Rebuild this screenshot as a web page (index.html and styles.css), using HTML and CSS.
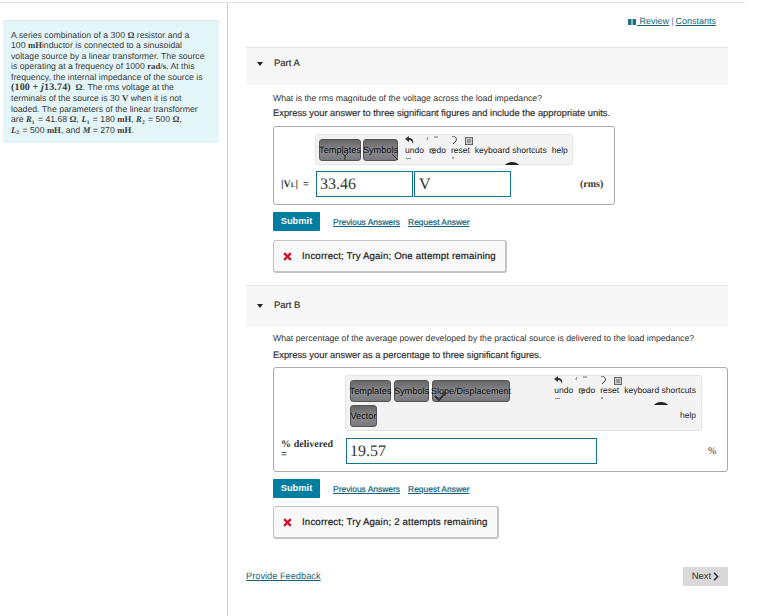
FILE: index.html
```html
<!DOCTYPE html>
<html lang="en">
<head>
<meta charset="utf-8">
<title>Part A and Part B</title>
<link rel="stylesheet" href="styles.css">
</head>
<body>
<div class="page">
  <aside class="side">
    <div class="problem">
      A series combination of a 300 <b class="m">Ω</b> resistor and a<br>
      100 <b class="m">mH</b>inductor is connected to a sinusoidal<br>
      voltage source by a linear transformer. The source<br>
      is operating at a frequency of 1000 <b class="m">rad/s</b>. At this<br>
      frequency, the internal impedance of the source is<br>
      <b class="m big">(100 + <i>j</i>13.74)</b> &nbsp;<b class="m">Ω</b>. The rms voltage at the<br>
      terminals of the source is 30 <b class="m">V</b> when it is not<br>
      loaded. The parameters of the linear transformer<br>
      are <b class="m"><i>R</i><sub>1</sub></b> = 41.68 <b class="m">Ω</b>, <b class="m"><i>L</i><sub>1</sub></b> = 180 <b class="m">mH</b>, <b class="m"><i>R</i><sub>2</sub></b> = 500 <b class="m">Ω</b>,<br>
      <b class="m"><i>L</i><sub>2</sub></b> = 500 <b class="m">mH</b>, and <b class="m"><i>M</i></b> = 270 <b class="m">mH</b>.
    </div>
  </aside>
  <main class="main">
    <div class="toplinks">
      <svg class="book" width="8" height="6" viewBox="0 0 8 6"><rect width="3.5" height="6" fill="#1f6f80"/><rect x="4.5" width="3.5" height="6" fill="#1f6f80"/></svg>
      <a class="link" href="#">&nbsp;Review</a><span class="sep">|</span><a class="link" href="#">Constants</a>
    </div>

    <section class="part part-a">
      <header class="part-head"><span class="caret"></span><span class="part-title">Part A</span></header>
      <div class="part-body">
        <p class="q">What is the rms magnitude of the voltage across the load impedance?</p>
        <p class="q strong">Express your answer to three significant figures and include the appropriate units.</p>
        <div class="answer answer-a">
          <div class="toolbar tb-a">
            <span class="tbtn t-tpl">Templates<svg class="glitch" width="10" height="8" viewBox="0 0 10 8"><path d="M2 1l3 3 3-3M5 4v4" stroke="#333" fill="none"/></svg></span>
            <span class="tbtn t-sym">Symbols<svg class="glitch g-corner" width="8" height="8" viewBox="0 0 8 8"><path d="M1 1l6 6" stroke="#333" fill="none"/></svg></span>
            <span class="tools">
              <span class="tool"><svg class="ic ic-undo" width="10" height="24" viewBox="0 0 10 24"><path d="M4 0L0 3l4 3V4c2 0 3 1 4 4 1-4-1-6-4-6z" fill="#333"/><path d="M1 22l2 1 1-1 1 1 1-1" stroke="#888" fill="none"/></svg>undo</span>
              <span class="tool"><svg class="ic ic-redo" width="14" height="20" viewBox="0 0 14 20"><path d="M8 1h4M1 4c0-1 .5-2 1-3" stroke="#777" fill="none"/><circle cx="7" cy="15" r="2.5" stroke="#777" fill="none"/></svg>redo</span>
              <span class="tool"><svg class="ic ic-reset" width="7" height="24" viewBox="0 0 7 24"><path d="M1 0c4 0 5 3 4 5L2 8" stroke="#333" fill="none"/><path d="M2 21v2" stroke="#555"/></svg>reset<svg class="ic ic-kb" width="8" height="8" viewBox="0 0 8 8"><rect x=".5" y=".5" width="7" height="7" fill="#ccc" stroke="#666"/><path d="M2 3h4M2 5h4" stroke="#666"/></svg></span>
              <span class="tool">keyboard shortcuts<svg class="ic ic-arc" width="14" height="4" viewBox="0 0 14 4"><path d="M0 4C3 0 11 0 14 4z" fill="#222"/></svg></span>
              <span class="tool">help</span>
            </span>
          </div>
          <div class="entry entry-a">
            <span class="label-v">|<b class="m">V</b><b class="m lsub">L</b>|<span class="eq"> = </span></span>
            <span class="field f-val">33.46</span>
            <span class="field f-unit">V</span>
            <span class="rms">(rms)</span>
          </div>
        </div>
        <div class="actions">
          <button class="submit" type="button">Submit</button>
          <a class="link act" href="#">Previous Answers</a>
          <a class="link act" href="#">Request Answer</a>
        </div>
        <div class="feedback fb-a">
          <svg class="x" width="9" height="9" viewBox="0 0 9 9"><path d="M1.2 1.2l6.6 6.6M7.8 1.2L1.2 7.8" stroke="#d0112b" stroke-width="2.4"/></svg>
          <span>Incorrect; Try Again; One attempt remaining</span>
        </div>
      </div>
    </section>

    <section class="part part-b">
      <header class="part-head"><span class="caret"></span><span class="part-title">Part B</span></header>
      <div class="part-body">
        <p class="q">What percentage of the average power developed by the practical source is delivered to the load impedance?</p>
        <p class="q strong">Express your answer as a percentage to three significant figures.</p>
        <div class="answer answer-b">
          <div class="toolbar tb-b">
            <div class="btn-group">
              <span class="tbtn b-tpl">Templates</span>
              <span class="tbtn b-sym">Symbols</span>
              <span class="tbtn b-slope">Slope/Displacement<svg class="check" width="18" height="9" viewBox="0 0 18 9"><path d="M1 4l4 4L12 0" stroke="#333" stroke-width="2" fill="none"/></svg></span>
              <span class="tbtn b-vec">Vector</span>
            </div>
            <div class="tool-group">
              <span class="tools">
                <span class="tool"><svg class="ic ic-undo" width="10" height="24" viewBox="0 0 10 24"><path d="M4 0L0 3l4 3V4c2 0 3 1 4 4 1-4-1-6-4-6z" fill="#333"/><path d="M1 22l2 1 1-1 1 1 1-1" stroke="#888" fill="none"/></svg>undo</span>
                <span class="tool"><svg class="ic ic-redo" width="14" height="20" viewBox="0 0 14 20"><path d="M8 1h4M1 4c0-1 .5-2 1-3" stroke="#777" fill="none"/><circle cx="7" cy="15" r="2.5" stroke="#777" fill="none"/></svg>redo</span>
                <span class="tool"><svg class="ic ic-reset" width="7" height="24" viewBox="0 0 7 24"><path d="M1 0c4 0 5 3 4 5L2 8" stroke="#333" fill="none"/><path d="M2 21v2" stroke="#555"/></svg>reset<svg class="ic ic-kb" width="8" height="8" viewBox="0 0 8 8"><rect x=".5" y=".5" width="7" height="7" fill="#ccc" stroke="#666"/><path d="M2 3h4M2 5h4" stroke="#666"/></svg></span>
                <span class="tool">keyboard shortcuts<svg class="ic ic-arc" width="14" height="4" viewBox="0 0 14 4"><path d="M0 4C3 0 11 0 14 4z" fill="#222"/></svg></span>
              </span>
              <span class="tool help-b">help</span>
            </div>
          </div>
          <div class="entry entry-b">
            <span class="label-p"><b class="m">%</b> <b class="m">delivered</b><br><span class="eq">=</span></span>
            <span class="field f-pct">19.57</span>
            <span class="pct">%</span>
          </div>
        </div>
        <div class="actions">
          <button class="submit" type="button">Submit</button>
          <a class="link act" href="#">Previous Answers</a>
          <a class="link act" href="#">Request Answer</a>
        </div>
        <div class="feedback fb-b">
          <svg class="x" width="9" height="9" viewBox="0 0 9 9"><path d="M1.2 1.2l6.6 6.6M7.8 1.2L1.2 7.8" stroke="#d0112b" stroke-width="2.4"/></svg>
          <span>Incorrect; Try Again; 2 attempts remaining</span>
        </div>
      </div>
    </section>

    <footer class="foot">
      <a class="link provide" href="#">Provide Feedback</a>
      <span class="next">Next <svg width="6" height="9" viewBox="0 0 6 9"><path d="M1 .8L4.6 4.5 1 8.2" stroke="#333" stroke-width="1.6" fill="none"/></svg></span>
    </footer>
  </main>
</div>
</body>
</html>
```
FILE: styles.css
```css
* { box-sizing: border-box; }
html, body { margin: 0; padding: 0; background: #fff; }
body {
  width: 762px;
  height: 616px;
  overflow: hidden;
  font-family: "Liberation Sans", Arial, sans-serif;
  font-size: 9.5px;
  color: #333;
  text-rendering: geometricPrecision;
}
.page {
  display: flex;
  width: 745px;
  height: 614px;
  margin-top: 2px;
  border-top: 1px solid #e2e2e2;
}
.side {
  width: 228px;
  flex: none;
  border-right: 1px solid #c8cdd2;
  padding: 17px 8px 0 3px;
}
.problem {
  height: 123px;
  background: #e4f5f7;
  border-top: 1px solid #dfe9ea;
  padding: 9px 4px 0 8px;
  font-size: 8.7px;
  line-height: 10.4px;
  white-space: nowrap;
  color: #3a3a3a;
}
.m { font-family: "Liberation Serif", serif; font-weight: 700; }
.m.big { font-size: 10px; letter-spacing: .15px; }
.m sub { font-size: 5.5px; line-height: 0; vertical-align: -1.5px; padding-right: 1px; }
.main {
  width: 517px;
  flex: none;
  padding-left: 18px;
  padding-right: 17px;
}
.toplinks {
  height: 44px;
  padding: 13px 12px 0 0;
  display: flex;
  justify-content: flex-end;
  align-items: flex-start;
  font-size: 9px;
  line-height: 11px;
}
.book { margin: 3px 1px 0 0; }
.sep { margin: 0 2px; color: #8a6a8a; }
.link { color: #12647c; text-decoration: underline; }
.part-head {
  display: flex;
  align-items: flex-start;
  background: #f7f7f7;
  border-top: 1px solid #e4e4e4;
  height: 38px;
  padding-top: 10px;
}
.part-b .part-head { height: 42px; padding-top: 14px; }
.caret {
  width: 0; height: 0;
  margin: 4px 0 0 11px;
  border-left: 3px solid transparent;
  border-right: 3px solid transparent;
  border-top: 4px solid #222;
}
.part-title { margin-left: 11px; font-size: 9.5px; line-height: 12px; color: #333; -webkit-text-stroke: .2px #333; }
.part-body { padding-left: 27px; }
.q { margin: 0; font-size: 8.7px; line-height: 11px; color: #333; white-space: nowrap; }
.part-a .q:first-child { padding-top: 8px; }
.part-b .q:first-child { padding-top: 6px; }
.q.strong { margin-top: 4px; font-size: 9.35px; -webkit-text-stroke: .2px #333; }
.part-b .q.strong { margin-top: 6px; }
.answer {
  border: 1px solid #aaa;
  border-radius: 3px;
  background: #fff;
}
.answer-a { width: 342px; height: 79px; margin-top: 7px; padding: 7px 0 0 41px; }
.answer-b { width: 455px; height: 105px; margin-top: 6px; padding: 7px 0 0 71px; }
.toolbar {
  background: #f3f3f3;
  border: 1px solid #e3e3e3;
  border-radius: 3px;
  color: #222;
}
.tb-a { width: 258px; height: 31px; display: flex; align-items: center; padding-left: 3px; }
.tb-b { width: 357px; height: 56px; display: flex; justify-content: space-between; padding: 4px 5px 0 4px; }
.btn-group { display: flex; flex-wrap: wrap; gap: 3px 3px; width: 180px; align-content: flex-start; }
.tool-group { display: flex; flex-direction: column; align-items: flex-end; padding-top: 5px; }
.help-b { margin-top: 15px; }
.tbtn {
  position: relative;
  display: inline-flex;
  align-items: center;
  justify-content: center;
  height: 22px;
  border: 1px solid #555;
  border-radius: 3px;
  background: linear-gradient(#656565, #8c8c90 55%, #78787c);
  color: #111;
  font-size: 9.2px;
  overflow: visible;
  white-space: nowrap;
}
.t-tpl { width: 42px; }
.t-sym { width: 35px; margin-left: 2px; }
.b-tpl { width: 41px; }
.b-sym { width: 35px; }
.b-slope { width: 78px; font-size: 9px; }
.b-vec { width: 27px; }
.glitch { position: absolute; left: 20px; bottom: 0; }
.g-corner { left: 27px; bottom: -1px; }
.check { position: absolute; left: 1px; bottom: 0; }
.tools { display: inline-flex; align-items: center; gap: 5px; margin-left: 7px; }
.tool-group .tools { margin-left: 0; }
.tool { position: relative; white-space: nowrap; font-size: 8.5px; }
.ic { position: absolute; }
.ic-undo { left: 0; top: -9px; }
.ic-redo { left: -3px; top: -9px; }
.ic-reset { left: 0; top: -9px; }
.ic-kb { left: 14px; top: -8px; }
.ic-arc { left: 30px; bottom: -10px; }
.entry { display: flex; align-items: center; }
.entry-a { margin-top: 6px; margin-left: -34px; }
.label-v { width: 35px; padding-top: 1px; font-size: 10px; line-height: 12px; white-space: nowrap; color: #333; }
.eq { margin-left: 2px; }
.lsub { font-size: 7px; }
.field {
  display: block;
  height: 26px;
  border: 1px solid #11758f;
  background: #fff;
  font-family: "Liberation Serif", serif;
  font-size: 16px;
  line-height: 26px;
  padding-left: 3px;
  color: #333;
}
.f-val { width: 97px; }
.f-unit { width: 97px; margin-left: 1px; padding-left: 4px; }
.rms { margin-left: 69px; font-family: "Liberation Serif", serif; font-weight: 700; font-size: 10px; }
.entry-b { margin-top: 7px; margin-left: -64px; align-items: flex-start; }
.entry-b .eq { margin-left: 0; }
.label-p { width: 65px; font-size: 10px; line-height: 10px; padding-top: 2px; white-space: nowrap; }
.f-pct { width: 251px; }
.pct { margin: 8px 0 0 111px; font-family: "Liberation Serif", serif; font-size: 10px; }
.actions { display: flex; align-items: center; height: 19px; margin-top: 7px; }
.submit {
  width: 47px;
  height: 19px;
  padding: 0;
  border: 0;
  border-radius: 1px;
  background: #007d9f;
  color: #fff;
  font: 700 9.3px/19px "Liberation Sans", Arial, sans-serif;
}
.act { font-size: 8.45px; -webkit-text-stroke: .2px #12647c; }
.submit + .act { margin-left: 13px; }
.act + .act { margin-left: 8px; }
.feedback {
  display: flex;
  align-items: center;
  height: 33px;
  margin-top: 9px;
  padding-left: 9px;
  background: #f8f8f8;
  border: 1px solid #c4c4c4;
  border-width: 1px 2px 2px 1px;
  border-radius: 3px;
  font-size: 9.7px;
  letter-spacing: .15px;
  color: #222;
  -webkit-text-stroke: .2px #222;
  white-space: nowrap;
}
.fb-a { width: 234px; }
.fb-b { width: 226px; margin-top: 8px; }
.x { margin-right: 10px; flex: none; }
.part-a { height: 238px; }
.foot {
  display: flex;
  justify-content: space-between;
  align-items: flex-start;
  margin-top: 28px;
  height: 20px;
}
.provide { margin-top: 3px; font-size: 9.25px; line-height: 12px; }
.next {
  display: inline-flex;
  align-items: center;
  justify-content: center;
  gap: 2px;
  width: 45px;
  height: 19px;
  border-radius: 1px;
  background: #d9d9d9;
  font-size: 9.5px;
  color: #333;
}
```
